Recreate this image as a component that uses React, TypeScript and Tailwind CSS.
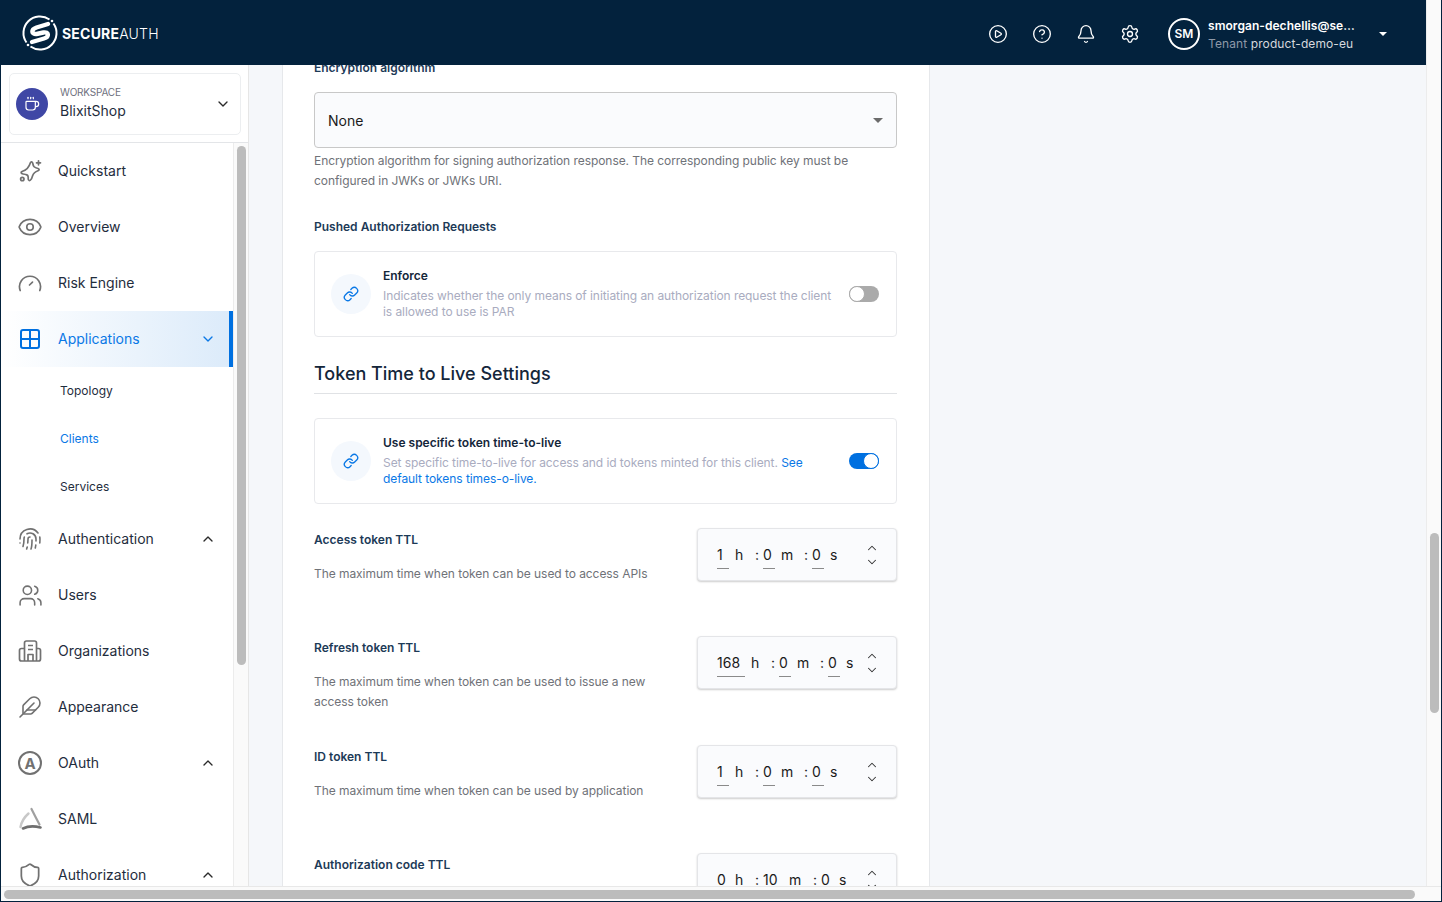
import { Bell, ChevronDown, ChevronUp, CircleHelp, CirclePlay, Coffee, Eye, Feather, Fingerprint, Link, Settings, Shield, Users } from "lucide-react"
import type { ReactNode } from "react"

const font = "font-['Inter','Noto_Sans',sans-serif]"

function Logo() {
  return (
    <svg width="38" height="38" viewBox="0 0 38 38" fill="none">
      <path d="M32.500 9.500A16.500 16.500 0 0 1 9.500 32.500M5.500 28.500A16.500 16.500 0 0 1 28.500 5.500" stroke="white" strokeWidth="2" />
      <circle cx="31" cy="7" r="1.300" fill="white" />
      <circle cx="7" cy="31" r="1.300" fill="white" />
      <path d="M27 10 L15.500 13.500 C9.500 15.500 10.500 20.500 15.500 20 L22.500 18.500 C28 17.500 28.500 23 23 24.500 L11 28" stroke="white" strokeWidth="4.400" strokeLinecap="round" strokeLinejoin="round" />
    </svg>
  )
}

function SparkleIcon() {
  return (
    <svg width="24" height="24" viewBox="0 0 24 24" fill="none" stroke="#717171" strokeWidth="1.700" strokeLinecap="round" strokeLinejoin="round">
      <path d="M12.500 3.500C13.500 2.500 14.500 3 14.800 4.500C15.300 7.500 16 8.500 20 9.500C21.500 10 21.500 11.200 20 11.700C16.500 12.800 15.500 14 14.500 17C13.800 19.500 12.800 21.800 11 21.500C9.800 21.300 10.300 19.500 10.200 18C10 15.800 8.500 15.500 5 15C3 14.700 2.500 13.200 4 12.500C8 11.500 11 8.500 12.500 3.500Z" />
      <circle cx="4.300" cy="20" r="1.700" />
      <path d="M20.500 1.800v4M18.500 3.800h4" />
    </svg>
  )
}

function GaugeIcon() {
  return (
    <svg width="24" height="24" viewBox="0 0 24 24" fill="none" stroke="#717171" strokeWidth="1.700" strokeLinecap="round">
      <path d="M2.200 19.500a10.500 10.500 0 1 1 19.600 0" />
      <path d="M11.500 14l3-2.800" />
    </svg>
  )
}

function GridIcon() {
  return (
    <svg width="24" height="24" viewBox="0 0 24 24" fill="none" stroke="#0070e0" strokeWidth="2">
      <rect x="3" y="3" width="18" height="18" rx="2" />
      <path d="M12 3v18M3 12h18" />
    </svg>
  )
}

function OrgIcon() {
  return (
    <svg width="24" height="24" viewBox="0 0 24 24" fill="none" stroke="#717171" strokeWidth="1.700" strokeLinejoin="round">
      <path d="M6.500 22V4a2 2 0 0 1 2-2h8a2 2 0 0 1 2 2v18" />
      <path d="M6.500 9.500H3.500A2 2 0 0 0 1.500 11.500V20a2 2 0 0 0 2 2h17a2 2 0 0 0 2-2v-8.500a2 2 0 0 0-2-2h-2" />
      <path d="M10 6.500h5M10 10.500h5M10 22v-6.500h5V22" />
    </svg>
  )
}

function OAuthIcon() {
  return (
    <div className="flex h-6 w-6 items-center justify-center rounded-full border-2 border-[#717171] text-[15px] font-bold leading-none text-[#717171]">A</div>
  )
}

function SamlIcon() {
  return (
    <svg width="24" height="24" viewBox="0 0 24 24" fill="none" strokeLinecap="round">
      <path d="M2.500 20C3.500 14.500 6.500 10 10.500 6.500" stroke="#c8c8c8" strokeWidth="2.400" />
      <path d="M13.500 2C16 7 18 11 21.500 17.500" stroke="#a0a0a0" strokeWidth="2.200" />
      <path d="M5 21.500C10 19 16 18.800 22.500 20.500" stroke="#6f6f6f" strokeWidth="2.600" />
    </svg>
  )
}

const navTop = [
  { name: "Quickstart", icon: <SparkleIcon /> },
  { name: "Overview", icon: <Eye size={26} strokeWidth={1.5} color="#717171" className="-ml-[1px]" /> },
  { name: "Risk Engine", icon: <GaugeIcon /> },
]

const navBottom = [
  { name: "Authentication", icon: <Fingerprint size={24} strokeWidth={1.6} color="#717171" />, arrow: true },
  { name: "Users", icon: <Users size={25} strokeWidth={1.5} color="#717171" /> },
  { name: "Organizations", icon: <OrgIcon /> },
  { name: "Appearance", icon: <Feather size={24} strokeWidth={1.6} color="#717171" /> },
  { name: "OAuth", icon: <OAuthIcon />, arrow: true },
  { name: "SAML", icon: <SamlIcon /> },
  { name: "Authorization", icon: <Shield size={26} strokeWidth={1.6} color="#717171" className="-ml-[1px]" />, arrow: true },
]

function NavItem({ name, icon, arrow }: { name: string; icon: ReactNode; arrow?: boolean }) {
  return (
    <div className="flex h-14 shrink-0 items-center pl-[17px] pr-[17px]">
      <div className="w-6">{icon}</div>
      <span className="ml-4 flex-1 pb-[2px] text-[14px] text-[#1f2d3d]">{name}</span>
      {arrow && <ChevronUp size={16} strokeWidth={2} color="#2a2a2a" />}
    </div>
  )
}

function Sidebar() {
  return (
    <div className="flex h-full w-[248px] shrink-0 flex-col overflow-hidden border-r border-[#e6e6e6] bg-white">
      <div className="h-[78px] w-full shrink-0 border-b border-[#e3e5e8] pl-2 pr-[7px] pt-2">
        <div className="flex h-[62px] items-center rounded-[5px] border border-[#eceef0] pl-[6px] pr-[9px]">
          <div className="flex h-8 w-8 items-center justify-center rounded-full bg-[#3f47a5]">
            <Coffee size={16} color="white" strokeWidth={1.8} />
          </div>
          <div className="ml-3 flex-1">
            <div className="-mt-[3px] text-[10px] leading-[14px] tracking-[-0.2px] text-[#6f7180]">WORKSPACE</div>
            <div className="mt-[3px] text-[14px] leading-[18px] text-[#1f2d3d]">BlixitShop</div>
          </div>
          <ChevronDown size={16} strokeWidth={2} color="#2a2a2a" />
        </div>
      </div>
      <div className="flex min-h-0 flex-1">
        <div className="flex w-[232px] shrink-0 flex-col overflow-hidden">
          {navTop.map((n) => (
            <NavItem key={n.name} name={n.name} icon={n.icon} />
          ))}
          <div className="flex h-14 w-[232px] shrink-0 items-center border-r-4 border-[#0070e0] bg-gradient-to-r from-white to-[#dcebfa] pl-[17px] pr-[13px]">
            <GridIcon />
            <span className="ml-4 flex-1 pb-[2px] text-[14px] text-[#0a78e6]">Applications</span>
            <ChevronDown size={16} strokeWidth={2} color="#0a78e6" />
          </div>
          <div className="flex h-12 shrink-0 items-center pl-[59px] text-[12px] text-[#1f2d3d]">Topology</div>
          <div className="flex h-12 shrink-0 items-center pl-[59px] text-[12px] text-[#0a78e6]">Clients</div>
          <div className="flex h-12 shrink-0 items-center pl-[59px] text-[12px] text-[#1f2d3d]">Services</div>
          {navBottom.map((n) => (
            <NavItem key={n.name} name={n.name} icon={n.icon} arrow={n.arrow} />
          ))}
        </div>
        <div className="h-full flex-1 border-l border-[#ececec] bg-[#fafafa] pl-[3px] pt-[3px]">
          <div className="h-[519px] w-[9px] rounded-full bg-[#bcbcbc]" />
        </div>
      </div>
    </div>
  )
}

function ToggleCard({ title, on, children }: { title: string; on?: boolean; children: ReactNode }) {
  return (
    <div className="flex h-[86px] items-center rounded border border-[#e8e9ec] pl-4 pr-[17px]">
      <div className="flex h-10 w-10 shrink-0 items-center justify-center rounded-full bg-[#f4f8fd]">
        <Link size={16} color="#0a78e6" strokeWidth={2} />
      </div>
      <div className="ml-3 w-[454px]">
        <div className="text-[12px] font-semibold leading-4 text-[#14263a]">{title}</div>
        <div className="mt-[4px] text-[12px] leading-4 tracking-[-0.07px] text-[#a9acc0]">{children}</div>
      </div>
      <div className="flex-1" />
      {on ? (
        <div className="flex h-4 w-[30px] items-center justify-end rounded-full bg-[#0070e0]">
          <div className="h-4 w-4 rounded-full border border-[#0070e0] bg-white" />
        </div>
      ) : (
        <div className="flex h-4 w-[30px] items-center rounded-full bg-[#aaaaaa]">
          <div className="h-4 w-4 rounded-full border border-[#aaaaaa] bg-white" />
        </div>
      )}
    </div>
  )
}

function Seg({ value, unit, w, uw, sep }: { value: string; unit: string; w: string; uw: string; sep?: boolean }) {
  return (
    <div className="flex items-start">
      {sep && <span className="w-[8px] text-[14px] leading-5">:</span>}
      <span className={`${w} border-b border-[#8a8a8a] pb-[3px] text-left text-[14px] leading-5`}>{value}</span>
      <span className={`${uw} ml-[6px] text-[14px] leading-5`}>{unit}</span>
    </div>
  )
}

const ttl = [
  {
    name: "Access token TTL",
    desc: "The maximum time when token can be used to access APIs",
    row: "h-[108px]",
    parts: [["1", "h", "w-[12px]", "w-[20px]"], ["0", "m", "w-[12px]", "w-[23px]"], ["0", "s", "w-[12px]", "w-[10px]"]],
  },
  {
    name: "Refresh token TTL",
    desc: "The maximum time when token can be used to issue a new access token",
    row: "h-[109px]",
    parts: [["168", "h", "w-[28px]", "w-[20px]"], ["0", "m", "w-[12px]", "w-[23px]"], ["0", "s", "w-[12px]", "w-[10px]"]],
  },
  {
    name: "ID token TTL",
    desc: "The maximum time when token can be used by application",
    row: "h-[108px]",
    parts: [["1", "h", "w-[12px]", "w-[20px]"], ["0", "m", "w-[12px]", "w-[23px]"], ["0", "s", "w-[12px]", "w-[10px]"]],
  },
  {
    name: "Authorization code TTL",
    desc: "",
    row: "h-[108px]",
    parts: [["0", "h", "w-[12px]", "w-[20px]"], ["10", "m", "w-[20px]", "w-[24px]"], ["0", "s", "w-[12px]", "w-[10px]"]],
  },
]

function Content() {
  return (
    <div className="h-full min-w-0 flex-1 overflow-hidden bg-[#f5f7fa] pl-[33px]">
      <div className="h-[1000px] w-[648px] border-x border-[#e6e8eb] bg-white pl-[31px] pr-8">
        <div className="-mt-[5px] text-[12px] font-semibold leading-4 text-[#1c3a57]">Encryption algorithm</div>
        <div className="mt-4 flex h-14 items-center justify-between rounded border border-[#c8c8c8] bg-[#fafbfd] pl-[13px] pr-[13px]">
          <span className="text-[14px] text-[#1a1a1a]">None</span>
          <div className="h-0 w-0 border-x-[5px] border-t-[5px] border-x-transparent border-t-[#6b6b6b]" />
        </div>
        <div className="mt-[3px] text-[12px] leading-5 tracking-[-0.06px] text-[#6f7278]">
          Encryption algorithm for signing authorization response. The corresponding public key must be configured in JWKs or JWKs URI.
        </div>
        <div className="mt-7 text-[12px] font-semibold leading-4 text-[#1c3a57]">Pushed Authorization Requests</div>
        <div className="mt-4">
          <ToggleCard title="Enforce">Indicates whether the only means of initiating an authorization request the client is allowed to use is PAR</ToggleCard>
        </div>
        <div className="mt-6 border-b border-[#e0e2e5] pb-[7px] pt-[1px] text-[18px] font-[450] leading-6 text-[#14263a]">Token Time to Live Settings</div>
        <div className="mt-6">
          <ToggleCard title="Use specific token time-to-live" on>
            Set specific time-to-live for access and id tokens minted for this client. <span className="text-[#0a78e6]">See default tokens times-o-live.</span>
          </ToggleCard>
        </div>
        <div className="mt-6">
          {ttl.map((t) => (
            <div key={t.name} className={`${t.row} flex justify-between`}>
              <div className="w-[345px] pt-[4px]">
                <div className="text-[12px] font-semibold leading-4 text-[#1c3a57]">{t.name}</div>
                <div className="mt-[16px] text-[12px] leading-5 tracking-[-0.06px] text-[#6f7278]">{t.desc}</div>
              </div>
              <div className="flex h-[53px] w-[200px] items-center justify-between rounded border border-[#e4e5e8] bg-[#fafbfd] pl-[19px] pr-[17px] shadow-[0_1px_2px_rgba(0,0,0,0.2)]">
                <div className="flex pt-[5px] text-[#1a1a1a]">
                  {t.parts.map((p, i) => (
                    <Seg key={i} value={p[0]} unit={p[1]} w={p[2]} uw={p[3]} sep={i > 0} />
                  ))}
                </div>
                <div className="flex flex-col items-center">
                  <ChevronUp size={14} strokeWidth={1.8} color="#333" />
                  <ChevronDown size={14} strokeWidth={1.8} color="#333" />
                </div>
              </div>
            </div>
          ))}
        </div>
      </div>
    </div>
  )
}

function Header() {
  return (
    <div className="flex h-[65px] shrink-0 items-center bg-[#03223d] pl-[20px] text-white">
      <Logo />
      <div className="ml-[3px] pt-[1px] text-[14px] tracking-[0.2px]">
        <span className="font-bold">SECURE</span>
        <span className="font-light">AUTH</span>
      </div>
      <div className="flex-1" />
      <div className="flex items-center gap-6 pt-[2px]">
        <CirclePlay size={20} strokeWidth={1.6} />
        <CircleHelp size={20} strokeWidth={1.6} />
        <Bell size={20} strokeWidth={1.6} />
        <Settings size={20} strokeWidth={1.6} />
      </div>
      <div className="ml-[28px] mt-[3px] flex h-8 w-8 items-center justify-center rounded-full border-2 border-white text-[12px] font-semibold">SM</div>
      <div className="ml-2 mt-[5px] w-[152px]">
        <div className="truncate text-[12px] font-semibold leading-[18px] tracking-[0.05px]">smorgan-dechellis@secureauth.com</div>
        <div className="whitespace-nowrap text-[12px] leading-[18px] tracking-[0.1px] text-[#d6d9de]">
          <span className="text-[#8e99a8]">Tenant</span> product-demo-eu
        </div>
      </div>
      <div className="ml-[19px] mr-[39px] mt-[3px] h-0 w-0 border-x-[4px] border-t-[4px] border-x-transparent border-t-white" />
    </div>
  )
}

export default function App() {
  return (
    <div className={`${font} flex h-screen w-full flex-col overflow-hidden border-x border-b border-[#03223d] bg-[#fafafa]`}>
      <div className="flex min-h-0 flex-1">
        <div className="flex min-w-0 flex-1 flex-col">
          <Header />
          <div className="flex min-h-0 flex-1">
            <Sidebar />
            <Content />
          </div>
        </div>
        <div className="w-[15px] shrink-0 border-l border-[#ececec] bg-[#fafafa] pl-[3px] pt-[533px]">
          <div className="h-[180px] w-[9px] rounded-full bg-[#bcbcbc]" />
        </div>
      </div>
      <div className="h-[15px] shrink-0 border-t border-[#e8e8e8] bg-[#fafafa] pl-[3px] pt-[3px]">
        <div className="h-[9px] w-[1411px] rounded-full bg-[#bcbcbc]" />
      </div>
    </div>
  )
}
